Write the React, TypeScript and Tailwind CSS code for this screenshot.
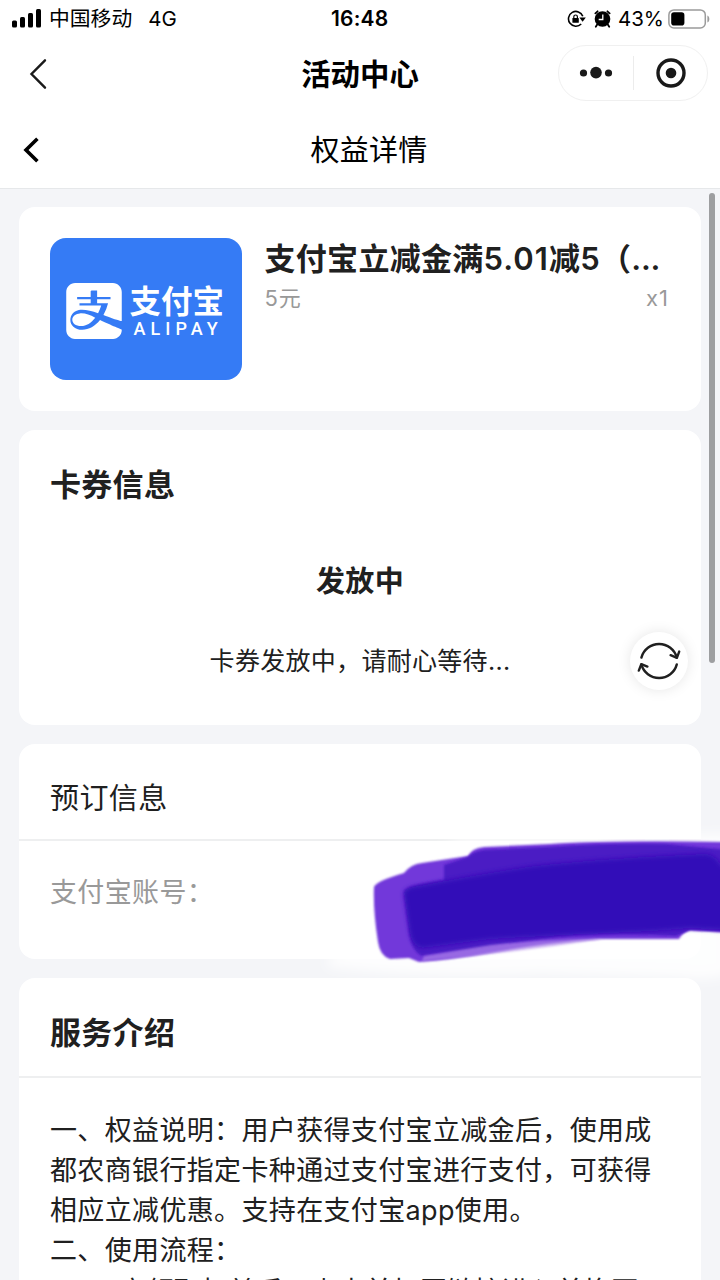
import { SiAlipay } from "react-icons/si";

const introLines = [
  "一、权益说明：用户获得支付宝立减金后，使用成",
  "都农商银行指定卡种通过支付宝进行支付，可获得",
  "相应立减优惠。支持在支付宝app使用。",
  "二、使用流程：",
];

function StatusBar() {
  return (
    <div className="relative flex h-[37px] items-center justify-between pl-3 pr-[10px]">
      <div className="flex items-center">
        <svg width="30" height="19" viewBox="0 0 30 19" fill="#000">
          <rect x="0" y="11.5" width="5" height="7" rx="1.5" />
          <rect x="8" y="8" width="5" height="10.5" rx="1.5" />
          <rect x="16" y="4" width="5" height="14.5" rx="1.5" />
          <rect x="24" y="0" width="5" height="18.5" rx="1.5" />
        </svg>
        <span className="ml-[7px] text-[20.8px] leading-[37px]">中国移动</span>
        <span className="ml-4 text-[20.5px] leading-[37px]">4G</span>
      </div>

      <span className="absolute left-[331px] top-0 text-[21px] font-semibold leading-[37px] tracking-[0.2px]">
        16:48
      </span>

      <div className="flex items-center">
        {/* rotation lock */}
        <svg width="19" height="18" viewBox="0 0 19 18" fill="none" stroke="#000">
          <path d="M15.8 6.2A7.4 7.4 0 1 0 14.2 14" strokeWidth="1.6" />
          <path d="M12.4 7.6h6.4l-3.2 4.2z" fill="#000" stroke="none" />
          <rect x="5.4" y="8" width="6.4" height="4.8" rx="0.6" fill="#000" stroke="none" />
          <path d="M6.8 8.4V6.8a1.8 1.8 0 0 1 3.6 0v1.6" strokeWidth="1.2" />
        </svg>
        {/* alarm */}
        <svg className="ml-2" width="17" height="18" viewBox="0 0 17 18" fill="none">
          <circle cx="8.5" cy="9" r="7.8" fill="#000" />
          <path
            d="M1.4 3.4 3.6 1.3M15.6 3.4 13.4 1.3M3.2 14.6 1.8 16.8M13.8 14.6l1.4 2.2"
            stroke="#000"
            strokeWidth="1.8"
            strokeLinecap="round"
          />
          <path d="M8.8 4.5v5H4.7" stroke="#fff" strokeWidth="1.3" />
        </svg>
        <span className="ml-[7px] w-[45px] whitespace-nowrap text-[20.5px] leading-[37px] tracking-[-0.1px]">
          43%
        </span>
        <svg className="ml-[5px]" width="42" height="20" viewBox="0 0 42 20" fill="none">
          <rect x="0.9" y="0.9" width="36.4" height="18" rx="5" stroke="#9b9b9b" strokeWidth="1.5" />
          <rect x="3.2" y="3.3" width="13.2" height="13.2" rx="2.8" fill="#000" />
          <path d="M39.4 6.5c2.6 1 2.6 6 0 7z" fill="#9b9b9b" />
        </svg>
      </div>
    </div>
  );
}

function NavBar() {
  return (
    <div className="flex h-[73px] items-center justify-between pl-[28px] pr-3">
      <div className="w-[134px]">
        <svg width="20" height="32" viewBox="0 0 20 32" fill="none">
          <path d="M17 2.3 3.5 16 17 29.7" stroke="#1a1a1a" strokeWidth="2.4" strokeLinecap="round" />
        </svg>
      </div>
      <h1 className="pt-px text-[29.4px] font-bold leading-[73px]">活动中心</h1>
      <div className="mb-[2px] flex h-14 w-[150px] items-center rounded-full border border-[#f0f0f0]">
        <div className="flex h-[34px] w-[75px] items-center justify-center border-r border-[#ececec]">
          <svg width="34" height="14" viewBox="0 0 34 14" fill="#191919">
            <circle cx="4.5" cy="7" r="3.6" />
            <circle cx="17" cy="6.6" r="5.8" />
            <circle cx="29.5" cy="7" r="3.6" />
          </svg>
        </div>
        <div className="flex flex-1 items-center justify-center">
          <svg width="30" height="30" viewBox="0 0 30 30" fill="none">
            <circle cx="15" cy="15" r="13" stroke="#191919" strokeWidth="3.4" />
            <circle cx="15" cy="15" r="5.3" fill="#191919" />
          </svg>
        </div>
      </div>
    </div>
  );
}

function PageHeader() {
  return (
    <div className="flex h-[79px] items-center border-b border-[#e6e8ea] pl-[23px]">
      <svg className="mt-px" width="16" height="26" viewBox="0 0 16 26" fill="none">
        <path d="M14.4 1.8 3 13 14.4 24.2" stroke="#000" strokeWidth="3.6" />
      </svg>
      <h2 className="flex-1 pr-[39px] pl-[18px] pt-[3px] text-center text-[29px] leading-[78px] tracking-[0.3px]">
        权益详情
      </h2>
    </div>
  );
}

function AlipayLogo() {
  return (
    <div className="flex h-[142px] w-[192px] shrink-0 items-center rounded-2xl bg-[#357bf5] pl-[15.5px] text-white">
      <div className="flex items-center pt-1">
        <SiAlipay size={56} />
        <div className="ml-2 flex flex-col">
          <span className="text-[31.5px] font-bold leading-8">支付宝</span>
          <span className="mt-[3px] pl-1 font-[Roboto] text-[18px] font-medium leading-4 tracking-[5.1px]">
            ALIPAY
          </span>
        </div>
      </div>
    </div>
  );
}

function RefreshButton() {
  return (
    <button className="absolute right-[13px] top-[202px] flex h-[58px] w-[58px] items-center justify-center rounded-full bg-white shadow-[0_0_14px_rgba(0,0,0,0.1)]">
      <svg
        className="shrink-0"
        width="44"
        height="40"
        viewBox="0 0 44 40"
        fill="none"
        stroke="#202020"
        strokeWidth="2.4"
        strokeLinecap="round"
        strokeLinejoin="round"
      >
        <path d="M4.4 16.6A18.3 18.3 0 0 1 39.8 16.6" />
        <path d="M33.6 14.2 39.9 16.8 42.2 10.6" />
        <path d="M39.8 23.4A18.3 18.3 0 0 1 4.4 23.4" />
        <path d="M1.8 29.6 4.3 23.2 10.4 25.6" />
      </svg>
    </button>
  );
}

// marker strokes that hide the account number
function Scribble() {
  return (
    <svg
      className="pointer-events-none absolute left-[300px] top-[820px]"
      width="420"
      height="180"
      viewBox="0 0 420 180"
      fill="none"
    >
      <defs>
        <filter id="edge" x="-10%" y="-10%" width="120%" height="120%">
          <feGaussianBlur stdDeviation="1.3" />
        </filter>
        <filter id="soft" x="-10%" y="-10%" width="120%" height="120%">
          <feGaussianBlur stdDeviation="2.4" />
        </filter>
        <filter id="haze" x="-20%" y="-50%" width="140%" height="200%">
          <feGaussianBlur stdDeviation="6" />
        </filter>
      </defs>
      <path
        d="M160 18 430 14V154Q405 162 380 157L240 153Q120 158 30 147Q20 139 40 132L140 30Z"
        fill="#fff"
        fillOpacity="0.85"
        filter="url(#haze)"
      />
      <path
        d="M74 67Q76 61 104 53Q111 44 122 43L168 36Q172 28 184 27L250 24Q310 20 430 22V112L390 110Q383 112 379 119L360 119 300 119Q245 123 190 133Q150 140 119 142L109 138 90 139Q80 136 78 122Q73 90 74 67Z"
        fill="#7238da"
        filter="url(#edge)"
      />
      <path
        d="M144 45 168 37Q172 32 184 30L250 27Q310 23 366 24L430 30V112L390 110 376 116Q300 111 240 119L122 136Q112 132 109 112L104 72Q106 65 144 60Z"
        fill="#4b1bc4"
        filter="url(#edge)"
      />
      <path
        d="M104 73Q106 67 120 66Q180 54 235 46Q310 38 406 34Q415 35 420 44L430 50V110L390 108Q350 112 310 113Q240 116 190 119L122 128Q112 126 110 112Z"
        fill="#320cb8"
        filter="url(#soft)"
      />
      <path
        d="M122 141Q210 133 304 119 260 118 190 125L124 136Z"
        fill="#b08bea"
        fillOpacity="0.6"
        filter="url(#edge)"
      />
    </svg>
  );
}

export default function App() {
  return (
    <div className="relative h-[1280px] w-[720px] overflow-hidden bg-white font-['Inter','Noto_Sans_CJK_SC',sans-serif] text-black">
      <StatusBar />
      <NavBar />
      <PageHeader />

      <main className="flex h-[1091px] flex-col gap-[19px] bg-[#f4f5f8] pl-[19px] pr-[19px] pt-[18px] text-[#202020]">
        <section className="flex h-[204px] shrink-0 rounded-2xl bg-white pl-[31px] pr-8 pt-[31px]">
          <AlipayLogo />
          <div className="ml-[22.5px] min-w-0 flex-1">
            <h3 className="whitespace-nowrap text-[31px] font-semibold leading-[42px] tracking-[0.3px]">
              支付宝立减金满<span className="tracking-[1px]">5.01</span>减5（
              <span className="tracking-[-0.3px]">...</span>
            </h3>
            <div className="flex justify-between text-[22px] leading-[36px] tracking-[1px] text-[#999]">
              <span>5元</span>
              <span>x1</span>
            </div>
          </div>
        </section>

        <section className="relative h-[295px] shrink-0 rounded-2xl bg-white pt-[31px]">
          <h3 className="pl-[31px] text-[31px] font-semibold leading-[48px] tracking-[0.3px]">卡券信息</h3>
          <p className="mt-[49px] text-center text-[29px] font-semibold leading-[48px] tracking-[0.3px]">发放中</p>
          <p className="mt-[30px] pt-px text-center text-[25px] leading-[48px] tracking-[0.3px]">
            卡券发放中，请耐心等待...
          </p>
          <RefreshButton />
        </section>

        <section className="h-[215px] shrink-0 rounded-2xl bg-white">
          <h3 className="h-[97px] border-b-2 border-[#eeeff0] pl-[31px] pt-[31px] text-[29px] leading-[48px] tracking-[0.4px]">
            预订信息
          </h3>
          <p className="pl-[31px] pt-[28px] text-[27px] leading-[48px] tracking-[0.35px] text-[#999]">支付宝账号：</p>
        </section>

        <section className="h-[400px] shrink-0 rounded-2xl bg-white">
          <h3 className="h-[100px] border-b-2 border-[#eeeff0] pl-[31px] pt-[31px] text-[31px] font-semibold leading-[48px] tracking-[0.3px]">
            服务介绍
          </h3>
          <div className="pl-[31px] pt-[33px] text-[27px] leading-10 tracking-[0.35px]">
            {introLines.map((line) => (
              <p key={line} className="whitespace-nowrap">
                {line}
              </p>
            ))}
            <p className="whitespace-nowrap pl-[3px] pt-px">1、用户领取权益后，点击并打开链接进入兑换页</p>
          </div>
        </section>
      </main>

      <Scribble />

      {/* scrollbar thumb */}
      <div className="absolute right-[5px] top-[193px] h-[470px] w-[6px] rounded-full bg-[#9d9ea0]" />
    </div>
  );
}
